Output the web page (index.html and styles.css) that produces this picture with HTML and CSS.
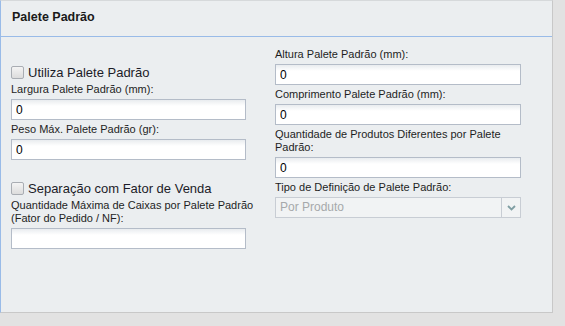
FILE: index.html
```html
<!DOCTYPE html>
<html lang="pt-BR">
<head>
 <meta charset="UTF-8">
 <title>Palete Padrão</title>
 <link rel="stylesheet" href="styles.css">
</head>
<body>
 <div class="panel">
  <div class="panel-header">Palete Padrão</div>

  <div class="panel-body">
   <!-- coluna esquerda -->
   <div class="column column-left">
    <div class="spacer"></div>
    <label class="check-row">
     <input type="checkbox" class="check">
     <span>Utiliza Palete Padrão</span>
    </label>
    <div class="field-label">Largura Palete Padrão (mm):</div>
    <input class="text-input" type="text" value="0">
    <div class="field-label">Peso Máx. Palete Padrão (gr):</div>
    <input class="text-input" type="text" value="0">
    <div class="spacer spacer-lg"></div>
    <label class="check-row">
     <input type="checkbox" class="check">
     <span>Separação com Fator de Venda</span>
    </label>
    <div class="field-label">Quantidade Máxima de Caixas por Palete Padrão<br>(Fator do Pedido / NF):</div>
    <input class="text-input" type="text" value="">
   </div>

   <!-- coluna direita -->
   <div class="column column-right">
    <div class="field-label">Altura Palete Padrão (mm):</div>
    <input class="text-input" type="text" value="0">
    <div class="field-label">Comprimento Palete Padrão (mm):</div>
    <input class="text-input" type="text" value="0">
    <div class="field-label">Quantidade de Produtos Diferentes por Palete<br>Padrão:</div>
    <input class="text-input" type="text" value="0">
    <div class="field-label">Tipo de Definição de Palete Padrão:</div>
    <div class="select-box">
     <span class="select-value">Por Produto</span>
     <span class="select-arrow">
      <svg width="9" height="6" viewBox="0 0 9 6"><polyline points="1,1 4.5,4.5 8,1" fill="none" stroke="#7f9ea3" stroke-width="1.8"/></svg>
     </span>
    </div>
   </div>
  </div>
 </div>
</body>
</html>
```

FILE: styles.css
```css
:root {
 --panel-bg: #ebeef0;
 --outer-bg: #e2e2e2;
 --blue-line: #99bbe8;
 --gray-line: #c8c8c8;
 --input-border: #b4bcc8;
 --text-color: #1e1e1e;
}

html,
body {
 margin: 0;
 padding: 0;
}

body {
 background-color: var(--outer-bg);
 font-family: "Liberation Sans", Arial, sans-serif;
 color: var(--text-color);
 width: 565px;
 height: 326px;
 overflow: hidden;
}

.panel {
 width: 551px;
 height: 311px;
 background-color: var(--panel-bg);
 border-top: 1px solid #d6d9db;
 border-left: 1px solid var(--blue-line);
 border-right: 1px solid var(--gray-line);
 border-bottom: 1px solid var(--gray-line);
}

.panel-header {
 height: 35px;
 line-height: 33px;
 padding-left: 11px;
 font-size: 12.5px;
 font-weight: 700;
 color: #1a1a1a;
 border-bottom: 1px solid var(--blue-line);
}

.panel-body {
 display: grid;
 grid-template-columns: 235px 246px;
 column-gap: 29px;
 padding: 8px 0 0 10px;
}

.column {
 display: flex;
 flex-direction: column;
}

.spacer {
 height: 19px;
}

.spacer-lg {
 height: 20px;
}

.check-row {
 display: flex;
 align-items: center;
 height: 16px;
 font-size: 13px;
 color: #1c1c28;
}

.check {
 width: 13px;
 height: 13px;
 margin: 0 4px 0 0;
 appearance: none;
 border: 1px solid #a9adb3;
 border-radius: 2px;
 background: linear-gradient(#f4f4f4, #dcdcdc);
}

.field-label {
 font-size: 11px;
 line-height: 13px;
 padding: 3px 0;
 color: var(--text-color);
 white-space: nowrap;
}

.text-input {
 box-sizing: border-box;
 width: 100%;
 height: 21px;
 margin: 0;
 padding: 0 4px;
 border: 1px solid var(--input-border);
 border-radius: 0;
 background: linear-gradient(#e9ecef, #ffffff 6px);
 font-family: "Liberation Sans", Arial, sans-serif;
 font-size: 12px;
 color: #000000;
 outline: none;
}

.select-box {
 box-sizing: border-box;
 height: 21px;
 display: flex;
 align-items: stretch;
 border: 1px solid #c8cdd4;
 background-color: #f1f3f4;
}

.select-value {
 flex-grow: 1;
 padding-left: 4px;
 font-size: 12px;
 line-height: 19px;
 color: #a6a9ab;
}

.select-arrow {
 width: 18px;
 border-left: 1px solid #c8cdd4;
 display: flex;
 align-items: center;
 justify-content: center;
}
```
